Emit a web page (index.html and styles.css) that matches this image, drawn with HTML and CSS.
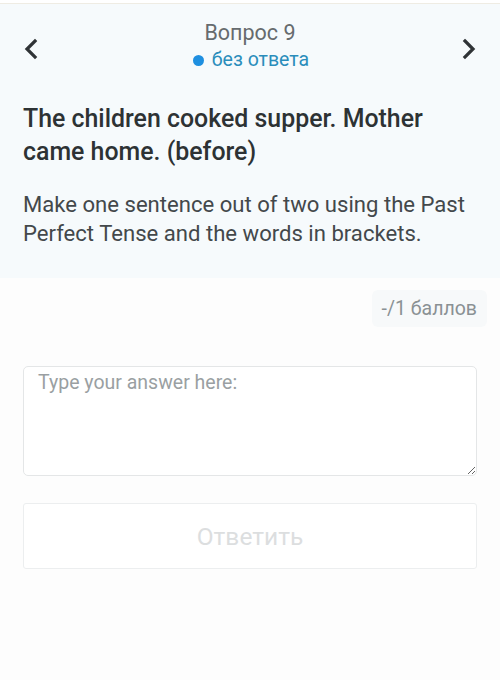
FILE: index.html
```html
<!DOCTYPE html>
<html lang="ru">
<head>
<meta charset="utf-8">
<link rel="stylesheet" href="styles.css">
</head>
<body>
<div class="topline"></div>
<header class="question">
  <div class="nav">
    <button class="arrow" aria-label="Назад">
      <svg width="14" height="22" viewBox="0 0 14 22"><path d="M11 3 L3 11 L11 19" fill="none" stroke="#2f3336" stroke-width="3.2" stroke-linecap="square"/></svg>
    </button>
    <div class="nav-title">
      <div class="num">Вопрос 9</div>
      <div class="status"><span class="dot"></span>без ответа</div>
    </div>
    <button class="arrow" aria-label="Вперёд">
      <svg width="14" height="22" viewBox="0 0 14 22"><path d="M3 3 L11 11 L3 19" fill="none" stroke="#2f3336" stroke-width="3.2" stroke-linecap="square"/></svg>
    </button>
  </div>
  <h1 class="q-title">The children cooked supper. Mother came home. (before)</h1>
  <p class="q-desc">Make one sentence out of two using the Past Perfect Tense and the words in brackets.</p>
</header>
<main class="answer">
  <div class="points-row"><span class="points">-/1 баллов</span></div>
  <textarea class="input" placeholder="Type your answer here:"></textarea>
  <button class="submit" disabled>Ответить</button>
</main>
</body>
</html>
```
FILE: styles.css
```css
html, body {
  margin: 0;
  padding: 0;
  background: #fdfdfd;
  font-family: Roboto, "Noto Sans", sans-serif;
}
.topline {
  height: 3px;
  border-bottom: 1px solid #efece3;
  background: #fff;
}
.question {
  background: #f6fafc;
  padding: 16px 23px 30px 23px;
}
.nav {
  display: flex;
  align-items: center;
  justify-content: space-between;
}
.arrow {
  background: none;
  border: 0;
  padding: 0;
  width: 16px;
  height: 24px;
  display: flex;
  align-items: center;
  justify-content: center;
  margin-top: 4px;
}
.nav-title {
  text-align: center;
}
.num {
  font-size: 21.5px;
  color: #666b6e;
  line-height: 26px;
}
.status {
  font-size: 19.5px;
  color: #2a8dbb;
  line-height: 28px;
  display: flex;
  align-items: center;
  justify-content: center;
  gap: 8px;
  margin-left: 2px;
}
.dot {
  width: 11px;
  height: 11px;
  border-radius: 50%;
  background: #1e8fe0;
}
.q-title {
  margin: 28px 0 0 0;
  font-size: 24.9px;
  line-height: 33px;
  font-weight: 500;
  color: #2d3234;
}
.q-desc {
  margin: 22px 0 0 0;
  font-size: 22.1px;
  line-height: 29px;
  color: #43484b;
}
.answer {
  padding: 12px 23px 0 23px;
  display: flex;
  flex-direction: column;
}
.points-row {
  display: flex;
  justify-content: flex-end;
}
.points {
  margin-right: -10px;
  padding: 6px 10px;
  font-size: 19.5px;
  line-height: 25px;
  color: #8a9194;
  background: #f7f9fa;
  border-radius: 6px;
}
.input {
  margin-top: 39px;
  height: 110px;
  box-sizing: border-box;
  border: 1px solid #e4e6e7;
  border-radius: 5px;
  background: #fff;
  padding: 3px 14px;
  font-family: Roboto, "Noto Sans", sans-serif;
  font-size: 19.5px;
  line-height: 26px;
  color: #333;
  resize: vertical;
}
.input::placeholder {
  color: #9a9fa2;
}
.submit {
  margin-top: 27px;
  height: 66px;
  border: 1px solid #eceeef;
  border-radius: 3px;
  background: #fff;
  font-family: Roboto, "Noto Sans", sans-serif;
  font-size: 24.5px;
  color: #dcdedf;
}
```
